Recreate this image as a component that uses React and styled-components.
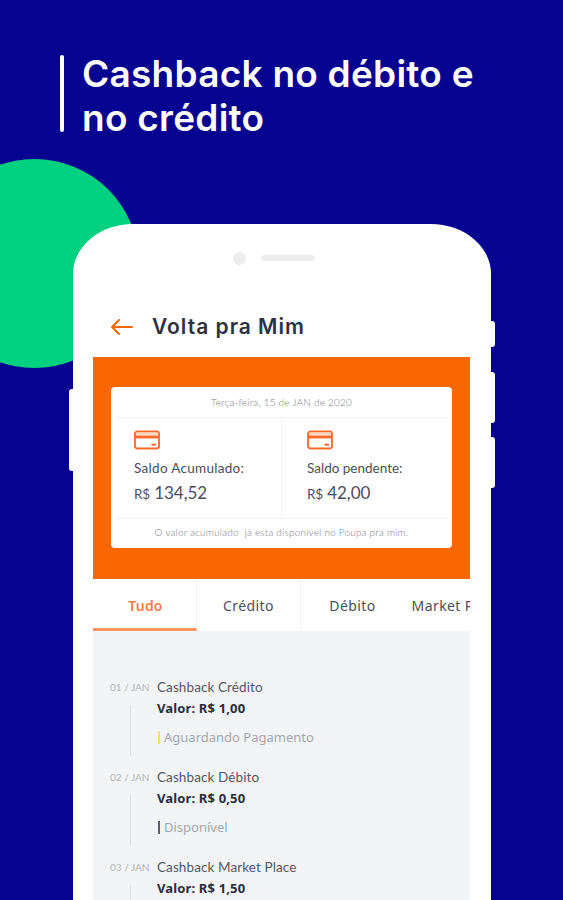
import styled, { createGlobalStyle } from 'styled-components'

const colors = {
  background: '#05038f',
  green: '#00d181',
  orange: '#fa6600',
  icon: '#f9682b',
  dark: '#2e3142',
  text: '#4b4e58',
  line: '#f3f3f4',
  grey: '#f2f4f6',
}

const GlobalStyle = createGlobalStyle`
  * {
    box-sizing: border-box;
  }
  body {
    margin: 0;
    font-family: Lato, sans-serif;
  }
`

const Page = styled.div`
  position: relative;
  height: 900px;
  overflow: hidden;
  background: ${colors.background};
`

const Circle = styled.div`
  position: absolute;
  left: -70px;
  top: 159px;
  width: 209px;
  height: 209px;
  border-radius: 50%;
  background: ${colors.green};
`

const Headline = styled.header`
  display: flex;
  height: 224px;
  padding: 55px 0 0 60px;
`

const HeadlineBar = styled.div`
  width: 4px;
  height: 77px;
  border-radius: 2px;
  background: #fff;
`

const Title = styled.h1`
  margin: -3px 0 0 18px;
  color: #fff;
  font-family: Inter, sans-serif;
  font-size: 37px;
  font-weight: 600;
  line-height: 43.5px;
  letter-spacing: 0.25px;
  white-space: nowrap;
`

const Phone = styled.main`
  position: relative;
  width: 418px;
  height: 720px;
  margin-left: 73px;
  padding: 0 21px 0 20px;
  border-radius: 60px 60px 0 0 / 50px 50px 0 0;
  background: #fff;
`

const SideButton = styled.div`
  position: absolute;
  ${(props) => props.$side}: -4px;
  top: ${(props) => props.$top}px;
  width: 8px;
  height: ${(props) => props.$height}px;
  border-radius: 3px;
  background: #fff;
`

const Speaker = styled.div`
  display: flex;
  align-items: center;
  gap: 15px;
  height: 68px;
  padding-left: 140px;
`

const Camera = styled.div`
  width: 13px;
  height: 13px;
  border-radius: 50%;
  background: #ededf0;
`

const SpeakerBar = styled.div`
  width: 54px;
  height: 6px;
  border-radius: 3px;
  background: #ededf0;
`

const AppBar = styled.div`
  display: flex;
  align-items: center;
  gap: 19px;
  height: 65px;
  padding: 4px 0 0 17px;
`

const ScreenTitle = styled.h2`
  margin: 0;
  color: ${colors.dark};
  font-family: Inter, sans-serif;
  font-size: 21px;
  font-weight: 600;
  letter-spacing: 1px;
`

const Balance = styled.section`
  height: 222px;
  padding: 30px 18px 0;
  background: ${colors.orange};
`

const Card = styled.div`
  display: flex;
  flex-direction: column;
  height: 161px;
  border-radius: 4px;
  background: #fff;
`

const CardNote = styled.p`
  height: ${(props) => props.$height}px;
  margin: 0 4px;
  color: #7c7e86;
  font-size: 10px;
  font-weight: 300;
  line-height: ${(props) => props.$height}px;
  letter-spacing: 0.2px;
  text-align: center;
  white-space: pre;
`

const CardBody = styled.div`
  display: flex;
  height: 102px;
  margin: 0 4px;
  border-top: 1px solid ${colors.line};
  border-bottom: 1px solid ${colors.line};
`

const Amount = styled.div`
  width: ${(props) => props.$width}px;
  padding: 12px 0 0 ${(props) => props.$indent}px;
  border-right: ${(props) => (props.$divided ? `1px solid ${colors.line}` : 'none')};
  color: ${colors.text};
  white-space: nowrap;
  svg {
    display: block;
  }
`

const AmountLabel = styled.div`
  margin-top: 9px;
  font-size: 13.5px;
  line-height: 18px;
  letter-spacing: ${(props) => props.$spacing || '0'};
`

const AmountValue = styled.div`
  margin-top: 5px;
  font-size: 17px;
  line-height: 22px;
  letter-spacing: -0.1px;
  small {
    font-size: 13.5px;
  }
`

const Tabs = styled.nav`
  display: flex;
  height: 51.5px;
  overflow: hidden;
`

const Tab = styled.div`
  flex: none;
  width: 104px;
  padding-left: ${(props) => (props.$active ? 2 : 0)}px;
  border-right: 1px solid ${(props) => (props.$last ? 'transparent' : colors.line)};
  border-bottom: 3px solid ${(props) => (props.$active ? '#f7945f' : 'transparent')};
  color: ${(props) => (props.$active ? '#fa7d45' : colors.text)};
  font-family: 'Noto Sans', sans-serif;
  font-size: 14px;
  font-weight: ${(props) => (props.$active ? 600 : 400)};
  line-height: 53px;
  letter-spacing: ${(props) => (props.$active ? '0.2px' : '0.4px')};
  text-align: center;
  white-space: nowrap;
`

const History = styled.ul`
  height: 340px;
  margin: 0;
  padding: 47px 0 0 17px;
  background: ${colors.grey};
  list-style: none;
`

const Entry = styled.li`
  display: flex;
  height: 90px;
`

const EntryDate = styled.div`
  width: 47px;
  color: #b2b4b9;
  font-size: 10px;
  line-height: 19px;
  white-space: nowrap;
  &::after {
    content: '';
    display: block;
    width: 1px;
    height: 51px;
    margin: 8px 0 0 20px;
    background: #dddfe2;
  }
`

const EntryText = styled.div`
  color: #555861;
  font-size: 13.5px;
  line-height: 19px;
  white-space: nowrap;
`

const EntryName = styled.div`
  letter-spacing: 0.1px;
`

const EntryValue = styled.div`
  margin-top: 2px;
  color: #292c3e;
  font-family: 'Noto Sans', sans-serif;
  font-size: 13px;
  font-weight: 700;
  letter-spacing: 0.15px;
`

const Status = styled.div`
  display: flex;
  align-items: center;
  gap: 5px;
  margin-top: 10px;
  color: #a5a7ad;
  font-family: 'Noto Sans', sans-serif;
  font-size: 13px;
  &::before {
    content: '';
    width: 2px;
    height: 13px;
    margin-left: 1px;
    margin-right: -1px;
    background: ${(props) => props.$color};
  }
`

const entries = [
  { date: '01 / JAN', name: 'Cashback Crédito', value: '1,00', status: 'Aguardando Pagamento', color: '#fbdf6b' },
  { date: '02 / JAN', name: 'Cashback Débito', value: '0,50', status: 'Disponível', color: '#5c5f69' },
  { date: '03 / JAN', name: 'Cashback Market Place', value: '1,50', status: 'Disponível', color: '#5c5f69' },
]

function BackArrow() {
  return (
    <svg width="23" height="18" viewBox="0 0 23 18" fill="none" stroke={colors.orange} strokeWidth="2" strokeLinecap="round" strokeLinejoin="round">
      <path d="M22 9H2M9 2L2 9L9 16" />
    </svg>
  )
}

function CardIcon() {
  return (
    <svg width="26" height="20" viewBox="0 0 26 20" fill="none" stroke={colors.icon}>
      <rect x="1" y="1.5" width="24" height="17" rx="2.5" fill="#fff" strokeWidth="1.8" />
      <path d="M2 4H24" stroke="#ffd9bd" strokeWidth="3" />
      <path d="M1 7H25" strokeWidth="2.8" />
      <path d="M17.5 14.7H22" strokeWidth="2" />
    </svg>
  )
}

function App() {
  return (
    <Page>
      <GlobalStyle />
      <Circle />
      <Headline>
        <HeadlineBar />
        <Title>
          Cashback no débito e
          <br />
          no crédito
        </Title>
      </Headline>
      <Phone>
        <SideButton $side="left" $top={165} $height={82} />
        <SideButton $side="right" $top={97} $height={26} />
        <SideButton $side="right" $top={148} $height={51} />
        <SideButton $side="right" $top={213} $height={51} />
        <Speaker>
          <Camera />
          <SpeakerBar />
        </Speaker>
        <AppBar>
          <BackArrow />
          <ScreenTitle>Volta pra Mim</ScreenTitle>
        </AppBar>
        <Balance>
          <Card>
            <CardNote $height={30}>Terça-feira, 15 de JAN de 2020</CardNote>
            <CardBody>
              <Amount $width={167} $indent={19} $divided>
                <CardIcon />
                <AmountLabel $spacing="0.3px">Saldo Acumulado:</AmountLabel>
                <AmountValue><small>R$</small> 134,52</AmountValue>
              </Amount>
              <Amount $width={166} $indent={25}>
                <CardIcon />
                <AmountLabel>Saldo pendente:</AmountLabel>
                <AmountValue><small>R$</small> 42,00</AmountValue>
              </Amount>
            </CardBody>
            <CardNote $height={27}>O valor acumulado  já esta disponível no Poupa pra mim.</CardNote>
          </Card>
        </Balance>
        <Tabs>
          <Tab $active>Tudo</Tab>
          <Tab>Crédito</Tab>
          <Tab $last>Débito</Tab>
          <Tab $last>Market Place</Tab>
        </Tabs>
        <History>
          {entries.map((entry) => (
            <Entry key={entry.date}>
              <EntryDate>{entry.date}</EntryDate>
              <EntryText>
                <EntryName>{entry.name}</EntryName>
                <EntryValue>Valor: R$ {entry.value}</EntryValue>
                <Status $color={entry.color}>{entry.status}</Status>
              </EntryText>
            </Entry>
          ))}
        </History>
      </Phone>
    </Page>
  )
}

export default App
